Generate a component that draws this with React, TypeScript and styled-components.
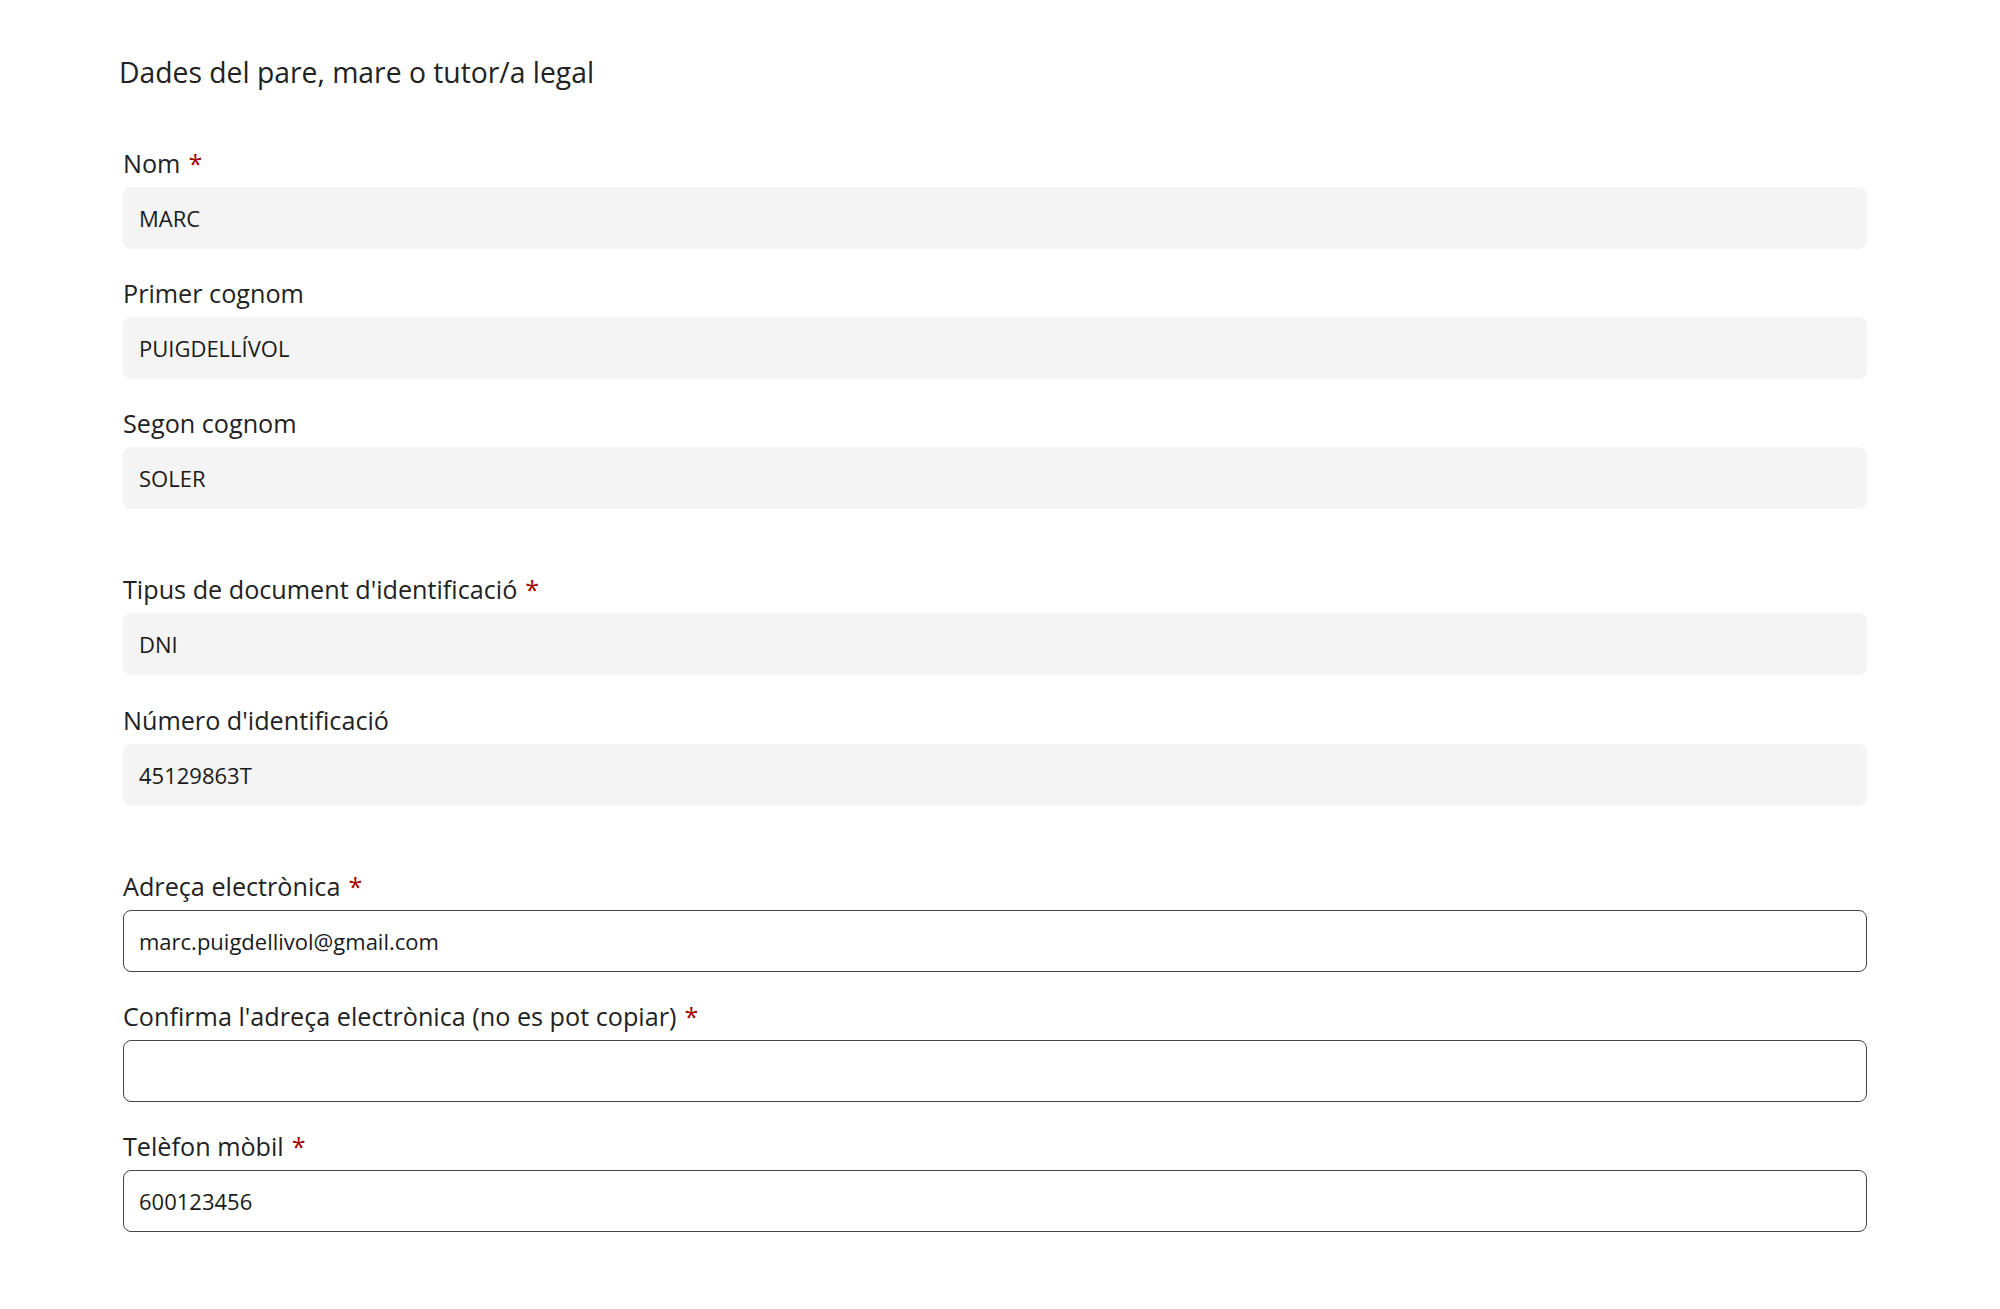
import styled, { createGlobalStyle } from "styled-components";

type FieldDef = {
    label: string;
    value?: string;
    required?: boolean;
    locked?: boolean;
};

// fields come in groups, separated by a bigger gap
const groups: FieldDef[][] = [
    [
        { label: "Nom", value: "MARC", required: true, locked: true },
        { label: "Primer cognom", value: "PUIGDELLÍVOL", locked: true },
        { label: "Segon cognom", value: "SOLER", locked: true },
    ],
    [
        { label: "Tipus de document d'identificació", value: "DNI", required: true, locked: true },
        { label: "Número d'identificació", value: "45129863T", locked: true },
    ],
    [
        { label: "Adreça electrònica", value: "marc.puigdellivol@gmail.com", required: true },
        { label: "Confirma l'adreça electrònica (no es pot copiar)", value: "", required: true },
        { label: "Telèfon mòbil", value: "600123456", required: true },
    ],
];

export default function App() {
    return (
        <>
            <GlobalStyle />
            <Page>
                <Title>Dades del pare, mare o tutor/a legal</Title>
                <Groups>
                    {groups.map((group, gi) => (
                        <Group key={gi}>
                            {group.map((f) => (
                                <Field key={f.label}>
                                    <Label>
                                        {f.label}
                                        {f.required && <Required>*</Required>}
                                    </Label>
                                    <Input
                                        type="text"
                                        locked={f.locked}
                                        readOnly={f.locked}
                                        defaultValue={f.value}
                                    />
                                </Field>
                            ))}
                        </Group>
                    ))}
                </Groups>
            </Page>
        </>
    );
}

/* === STYLES === */

const GlobalStyle = createGlobalStyle`
  body {
    margin: 0;
    background: #fff;
    font-family: "Open Sans", "Noto Sans", sans-serif;
    color: #222;
  }
`;

const Page = styled.div`
  padding: 53px 133px 60px 119px;
`;

const Title = styled.h2`
  margin: 0 0 55px;
  font-size: 28.3px;
  line-height: 38px;
  font-weight: 400;
  color: #222;
`;

const Groups = styled.div`
  display: flex;
  flex-direction: column;
  gap: 63px;
  padding-left: 4px;
`;

const Group = styled.div`
  display: flex;
  flex-direction: column;
  gap: 27.2px;
`;

const Field = styled.div`
  display: flex;
  flex-direction: column;
  gap: 7px;
`;

const Label = styled.label`
  font-size: 25.2px;
  line-height: 34px;
  color: #222;
`;

const Required = styled.span`
  color: #a30000;
  margin-left: 8px;
`;

const Input = styled.input.withConfig({
    shouldForwardProp: (prop) => prop !== "locked",
})<{ locked?: boolean }>`
  box-sizing: border-box;
  width: 100%;
  height: 62px;
  margin: 0;
  padding: 0 15px;
  border-radius: 8px;
  border: ${({ locked }) => (locked ? "1px solid #f4f4f4" : "1.5px solid #444")};
  background: ${({ locked }) => (locked ? "#f4f4f4" : "#fff")};
  font-family: inherit;
  font-size: 22px;
  color: #1a1a1a;

  &:focus {
    outline: none;
  }
`;
